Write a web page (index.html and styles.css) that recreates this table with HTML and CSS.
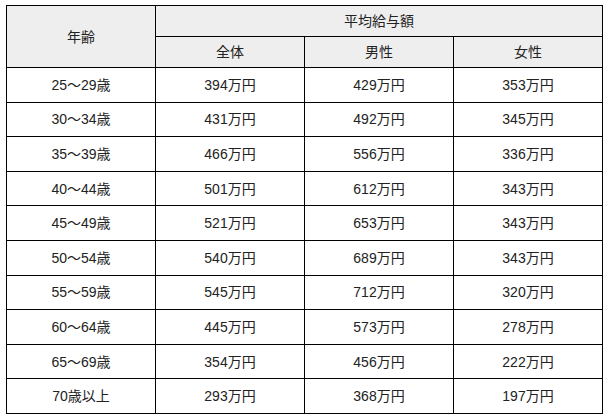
FILE: index.html
```html
<!DOCTYPE html>
<html lang="ja">
<head>
<meta charset="utf-8">
<link rel="stylesheet" href="styles.css">
</head>
<body>
<table class="salary">
  <thead>
    <tr class="head-top">
      <th class="age-head" rowspan="2">年齢</th>
      <th colspan="3">平均給与額</th>
    </tr>
    <tr class="head-sub">
      <th>全体</th>
      <th>男性</th>
      <th>女性</th>
    </tr>
  </thead>
  <tbody>
    <tr><td>25～29歳</td><td>394万円</td><td>429万円</td><td>353万円</td></tr>
    <tr><td>30～34歳</td><td>431万円</td><td>492万円</td><td>345万円</td></tr>
    <tr><td>35～39歳</td><td>466万円</td><td>556万円</td><td>336万円</td></tr>
    <tr><td>40～44歳</td><td>501万円</td><td>612万円</td><td>343万円</td></tr>
    <tr><td>45～49歳</td><td>521万円</td><td>653万円</td><td>343万円</td></tr>
    <tr><td>50～54歳</td><td>540万円</td><td>689万円</td><td>343万円</td></tr>
    <tr><td>55～59歳</td><td>545万円</td><td>712万円</td><td>320万円</td></tr>
    <tr><td>60～64歳</td><td>445万円</td><td>573万円</td><td>278万円</td></tr>
    <tr><td>65～69歳</td><td>354万円</td><td>456万円</td><td>222万円</td></tr>
    <tr><td>70歳以上</td><td>293万円</td><td>368万円</td><td>197万円</td></tr>
  </tbody>
</table>
</body>
</html>
```

FILE: styles.css
```css
html, body {
  margin: 0;
  padding: 0;
  background: #ffffff;
}

body {
  padding: 5px 0 0 6px;
  font-family: "Liberation Sans", Arial, "Noto Sans CJK JP", sans-serif;
  font-size: 14px;
  color: #222222;
}

.salary {
  width: 597px;
  border-collapse: collapse;
  table-layout: fixed;
}

.salary th,
.salary td {
  border: 1px solid #000000;
  padding: 0;
  text-align: center;
  vertical-align: middle;
  font-weight: normal;
  line-height: 18px;
}

.salary th {
  background: #eeeeee;
}

.head-top,
.head-sub {
  height: 31px;
}

.salary tbody tr {
  height: 34.6px;
}
```
